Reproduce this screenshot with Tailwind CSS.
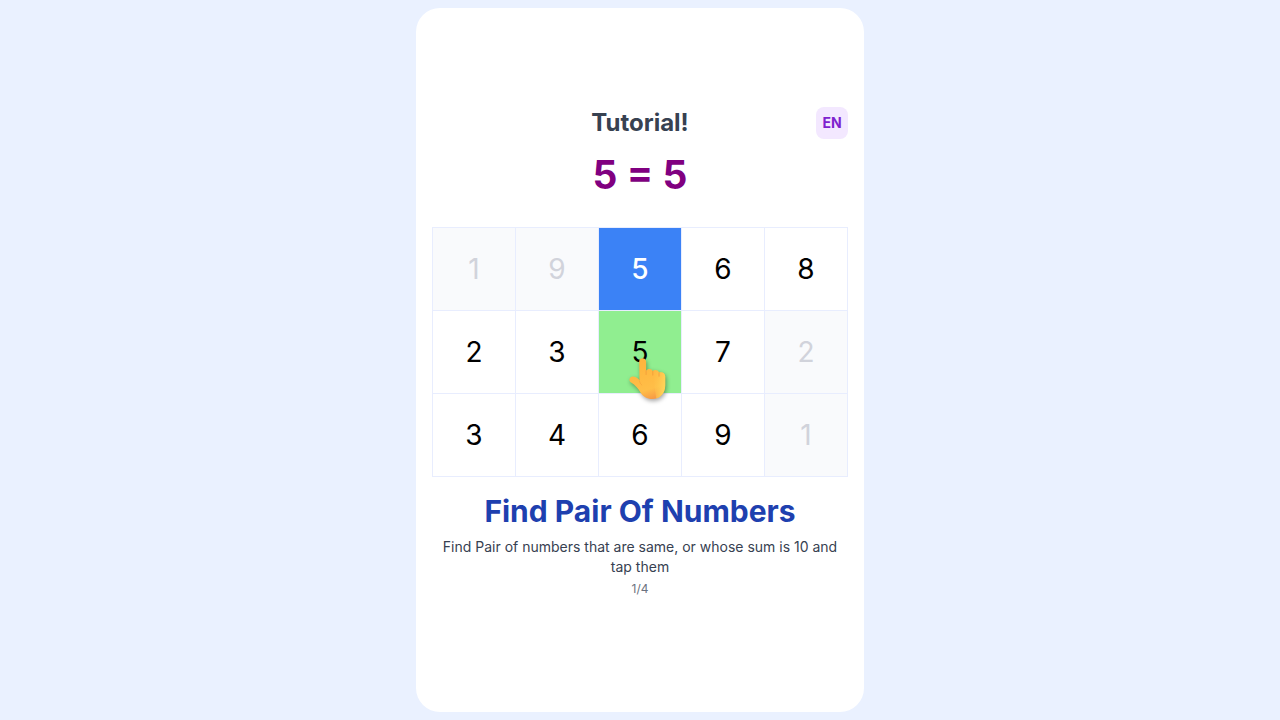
<!DOCTYPE html>
<html lang="en">
<head>
<meta charset="utf-8">
<meta name="viewport" content="width=device-width, initial-scale=1">
<title>Tutorial</title>
<script src="https://cdn.jsdelivr.net/npm/@tailwindcss/browser@4"></script>
</head>
<body class="min-h-screen flex justify-center bg-[#eaf1ff] p-2 font-['Inter',sans-serif]">
<main class="w-full max-w-md flex flex-col justify-center rounded-3xl bg-white px-4 pb-4">
  <header class="grid grid-cols-[32px_1fr_32px] items-center">
    <h1 class="col-start-2 text-center text-2xl font-bold text-[#374151]">Tutorial!</h1>
    <button type="button" class="size-8 rounded-lg bg-[#f3e8ff] text-sm font-bold text-[#7e22ce]">EN</button>
  </header>
  <p class="h-[88px] pt-4 text-center text-[39px] leading-10 font-bold text-[purple]">5 = 5</p>
  <section aria-label="Number board" class="grid grid-cols-5 gap-px border border-[#e8edfe] bg-[#e8edfe] text-[28px]">
    <button type="button" disabled class="aspect-square bg-[#f9fafc] text-[#d1d3db]">1</button>
    <button type="button" disabled class="aspect-square bg-[#f9fafc] text-[#d1d3db]">9</button>
    <button type="button" class="aspect-square bg-[#3b82f6] font-medium text-white">5</button>
    <button type="button" class="aspect-square bg-white">6</button>
    <button type="button" class="aspect-square bg-white">8</button>
    <button type="button" class="aspect-square bg-white">2</button>
    <button type="button" class="aspect-square bg-white">3</button>
    <button type="button" class="relative aspect-square bg-[#90ee90]">5
      <svg class="absolute top-[46px] left-[29px] z-10 h-[44px] w-[40px] drop-shadow-[1px_2px_2px_rgba(0,0,0,0.35)]" viewBox="0 0 40 44" fill="none" aria-hidden="true">
        <defs>
          <linearGradient id="skin" x1="12" y1="3" x2="24" y2="42" gradientUnits="userSpaceOnUse">
            <stop stop-color="#ffb43c"/><stop offset=".75" stop-color="#ffbe48"/><stop offset="1" stop-color="#f79a45"/>
          </linearGradient>
          <linearGradient id="side" x1="25" y1="20" x2="37" y2="22" gradientUnits="userSpaceOnUse">
            <stop stop-color="#ffc34b" stop-opacity="0"/><stop offset="1" stop-color="#ffd257"/>
          </linearGradient>
        </defs>
        <path d="M11.2 4.7C11 .1 18 .1 18.1 4.7v9c1.5-2.4 5.8-2.1 6.7.4 1.5-1.7 5.5-1.2 6.2 1.5 2.3-1.2 6.2.1 6.2 3.8v9c0 8-5.5 13.5-12.7 13.5-5.6 0-9.5-2.4-12-6.5-2.2-3.7-5.3-7.4-9.4-9.8-3-1.8-1.7-6.4 2.3-6 2.7.3 4.4 1.6 6.1 3.6Z" fill="url(#skin)"/>
        <path d="M24.8 14.1c1.5-1.7 5.5-1.2 6.2 1.5 2.3-1.2 6.2.1 6.2 3.8v9c0 6.7-3.9 11.7-9 13.1Z" fill="url(#side)"/>
        <path d="M18.1 13.8v3.7M24.8 14.3v3.8M31 15.8v3.4" stroke="#ee9338" stroke-opacity=".75" stroke-width=".9" stroke-linecap="round"/>
        <path d="M11.4 23.7c.3 2 1.2 3.4 2.4 4.3" stroke="#f59d38" stroke-opacity=".5" stroke-width="1" stroke-linecap="round"/>
      </svg>
    </button>
    <button type="button" class="aspect-square bg-white">7</button>
    <button type="button" disabled class="aspect-square bg-[#f9fafc] text-[#d1d3db]">2</button>
    <button type="button" class="aspect-square bg-white">3</button>
    <button type="button" class="aspect-square bg-white">4</button>
    <button type="button" class="aspect-square bg-white">6</button>
    <button type="button" class="aspect-square bg-white">9</button>
    <button type="button" disabled class="aspect-square bg-[#f9fafc] text-[#d1d3db]">1</button>
  </section>
  <h2 class="mt-4 text-center text-3xl font-bold text-[#1e40af]">Find Pair Of Numbers</h2>
  <p class="mt-2 text-center text-sm text-[#374151]">Find Pair of numbers that are same, or whose sum is 10 and tap them</p>
  <p class="mt-1 text-center text-xs text-[#6b7280]">1/4</p>
</main>
</body>
</html>
